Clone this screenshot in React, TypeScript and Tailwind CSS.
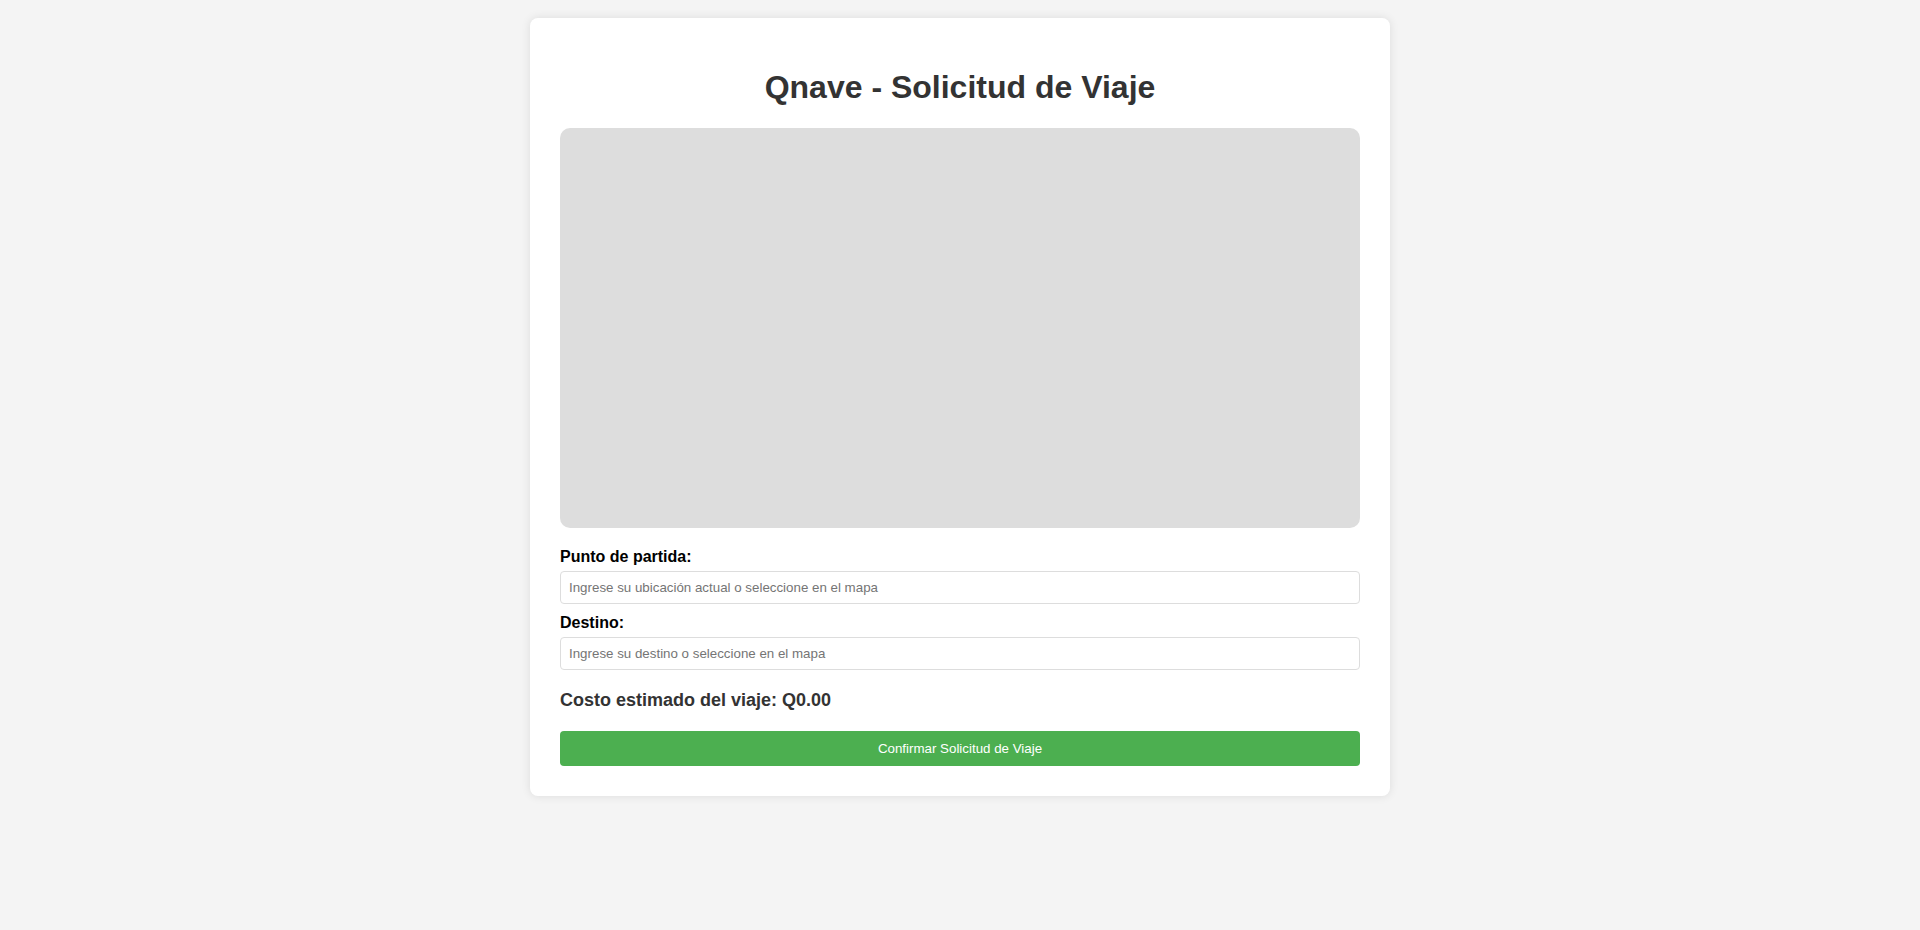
export default function App() {
  return (
    <div className="min-h-screen bg-[#f4f4f4] font-['Liberation_Sans',Arial,sans-serif] pt-[18px]">
      <div className="mx-auto w-[860px] bg-white rounded-[8px] shadow-[0_0_10px_rgba(0,0,0,0.1)] p-[30px]">
        {/* Header */}
        <h1 className="text-center text-[32px] font-bold text-[#333] leading-[normal] my-[21.44px]">
          Qnave - Solicitud de Viaje
        </h1>

        {/* Map placeholder */}
        <div className="h-[400px] w-full bg-[#ddd] rounded-[10px] mb-[20px]" />

        {/* Form */}
        <label className="block font-bold text-base text-black leading-[normal] mb-[5px]">
          Punto de partida:
        </label>
        <input
          type="text"
          placeholder="Ingrese su ubicación actual o seleccione en el mapa"
          className="block w-full px-[8px] py-[8px] text-[13.333px] leading-[normal] border border-[#ddd] rounded-[4px] mb-[10px] placeholder:text-[#757575] outline-none"
        />

        <label className="block font-bold text-base text-black leading-[normal] mb-[5px]">
          Destino:
        </label>
        <input
          type="text"
          placeholder="Ingrese su destino o seleccione en el mapa"
          className="block w-full px-[8px] py-[8px] text-[13.333px] leading-[normal] border border-[#ddd] rounded-[4px] placeholder:text-[#757575] outline-none"
        />

        <h3 className="mt-[20px] mb-[20px] text-[18px] font-bold text-[#333] leading-[normal]">
          Costo estimado del viaje: Q0.00
        </h3>

        <button className="block w-full bg-[#4caf50] text-white text-[13.333px] leading-[normal] py-[10px] rounded-[4px]">
          Confirmar Solicitud de Viaje
        </button>
      </div>
    </div>
  );
}
